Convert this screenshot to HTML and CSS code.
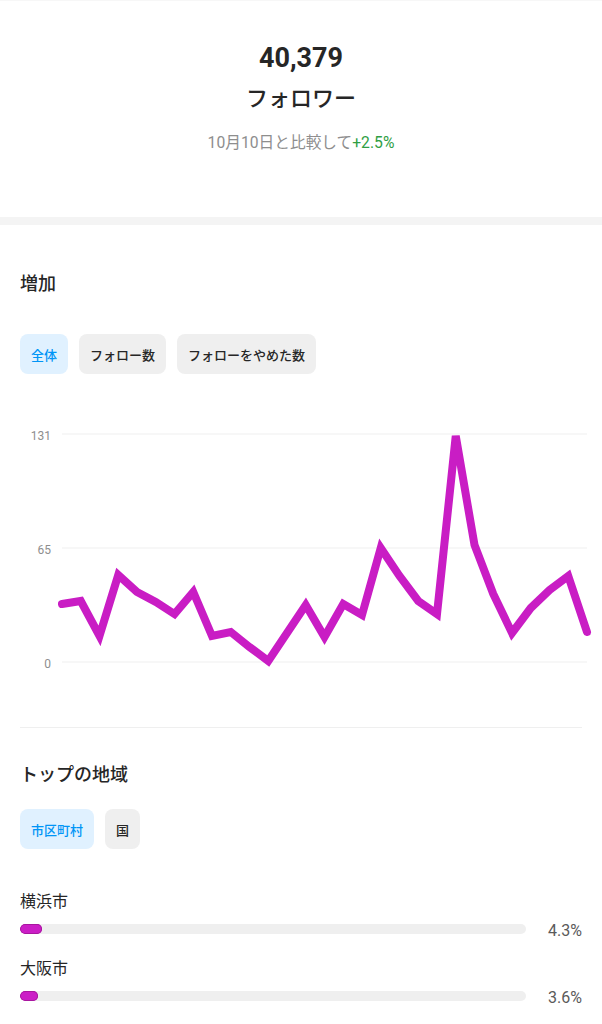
FILE: index.html
```html
<!DOCTYPE html>
<html lang="ja">
<head>
    <meta charset="UTF-8">
    <meta name="viewport" content="width=device-width, initial-scale=1.0">
    <title>フォロワー</title>
    <link rel="stylesheet" href="styles.css">
</head>
<body>
    <header class="summary">
        <p class="count">40,379</p>
        <p class="count-label">フォロワー</p>
        <p class="compare">10月10日と比較して<span class="up">+2.5%</span></p>
    </header>

    <div class="band"></div>

    <section class="growth">
        <div class="growth-head">
            <h2 class="title">増加</h2>
            <div class="chips">
                <span class="chip active">全体</span>
                <span class="chip">フォロー数</span>
                <span class="chip">フォローをやめた数</span>
            </div>
        </div>

        <svg class="chart" viewBox="0 0 602 260" width="602" height="260">
            <line class="grid" x1="62" y1="14" x2="587" y2="14"/>
            <line class="grid" x1="62" y1="128" x2="587" y2="128"/>
            <line class="grid" x1="62" y1="242" x2="587" y2="242"/>
            <text class="axis" x="51" y="20">131</text>
            <text class="axis" x="51" y="134">65</text>
            <text class="axis" x="51" y="248">0</text>
            <polyline class="line" points="62,184 80.75,181 99.5,216 118.25,155 137,172 155.75,182 174.5,194 193.25,172 212,216 230.75,212 249.5,227 268.25,241 287,213 305.75,185 324.5,217 343.25,184 362,195 380.75,128 399.5,156 418.25,181 437,194 455.75,16 474.5,125 493.25,174 512,213 530.75,188 549.5,170 568.25,156 587,212"/>
        </svg>

        <div class="divider"></div>
    </section>

    <section class="regions">
        <h2 class="title">トップの地域</h2>
        <div class="chips">
            <span class="chip active">市区町村</span>
            <span class="chip">国</span>
        </div>

        <div class="bars">
            <div class="bar-item">
                <div class="bar-name">横浜市</div>
                <div class="bar-row">
                    <div class="track"><div class="fill" style="width: 4.3%"></div></div>
                    <span class="pct">4.3%</span>
                </div>
            </div>
            <div class="bar-item">
                <div class="bar-name">大阪市</div>
                <div class="bar-row">
                    <div class="track"><div class="fill" style="width: 3.6%"></div></div>
                    <span class="pct">3.6%</span>
                </div>
            </div>
        </div>
    </section>
</body>
</html>
```

FILE: styles.css
```css
body {
    margin: 0;
    font-family: Roboto, "Noto Sans CJK JP", sans-serif;
    color: #262626;
    background-color: #fff;
}
p {
    margin: 0;
}

/* header numbers */
.summary {
    height: 217px;
    box-sizing: border-box;
    padding-top: 41px;
    text-align: center;
    border-top: 1px solid #f7f7f7;
}
.count {
    font-size: 27px;
    font-weight: 700;
    line-height: 32px;
}
.count-label {
    margin-top: 10px;
    font-size: 22px;
    font-weight: 500;
    line-height: 30px;
}
.compare {
    margin-top: 19px;
    font-size: 15.7px;
    line-height: 20px;
    color: #8e8e8e;
}
.up {
    color: #2f9e44;
}
.band {
    height: 8px;
    background-color: #f4f4f4;
}

/* sections */
.title {
    margin: 0;
    font-size: 18px;
    font-weight: 500;
    line-height: 24px;
}
.chips {
    display: flex;
    gap: 11px;
}
.chip {
    display: flex;
    align-items: center;
    height: 40px;
    padding: 0 11px;
    border-radius: 8px;
    background-color: #efefef;
    font-size: 13px;
    font-weight: 500;
}
.chip.active {
    background-color: #e0f1ff;
    color: #0095f6;
}

.growth {
    padding-top: 47px;
}
.growth-head {
    padding: 0 20px;
}
.growth .chips {
    margin-top: 38px;
}
.chart {
    display: block;
    margin-top: 46px;
}
.grid {
    stroke: #efefef;
    stroke-width: 1;
}
.axis {
    font-family: Roboto, sans-serif;
    font-size: 12px;
    fill: #8e8e8e;
    text-anchor: end;
}
.line {
    fill: none;
    stroke: #c91dc4;
    stroke-width: 8;
    stroke-linecap: round;
}
.divider {
    height: 1px;
    margin: 47px 20px 0;
    background-color: #efefef;
}

.regions {
    padding: 35px 20px 0;
}
.regions .chips {
    margin-top: 22px;
}
.bars {
    margin-top: 42px;
}
.bar-item + .bar-item {
    margin-top: 18px;
}
.bar-name {
    font-size: 16px;
    line-height: 22px;
}
.bar-row {
    display: flex;
    align-items: center;
    height: 22px;
    margin-top: 5px;
}
.track {
    flex: 1;
    height: 10px;
    border-radius: 5px;
    background-color: #efefef;
    overflow: hidden;
}
.fill {
    height: 100%;
    border-radius: 5px;
    background-color: #cb1ec6;
    box-shadow: inset 0 0 0 1px #a8179f;
}
.pct {
    width: 56px;
    padding-top: 3px;
    text-align: right;
    font-size: 16px;
    color: #5a5a5a;
}
```
